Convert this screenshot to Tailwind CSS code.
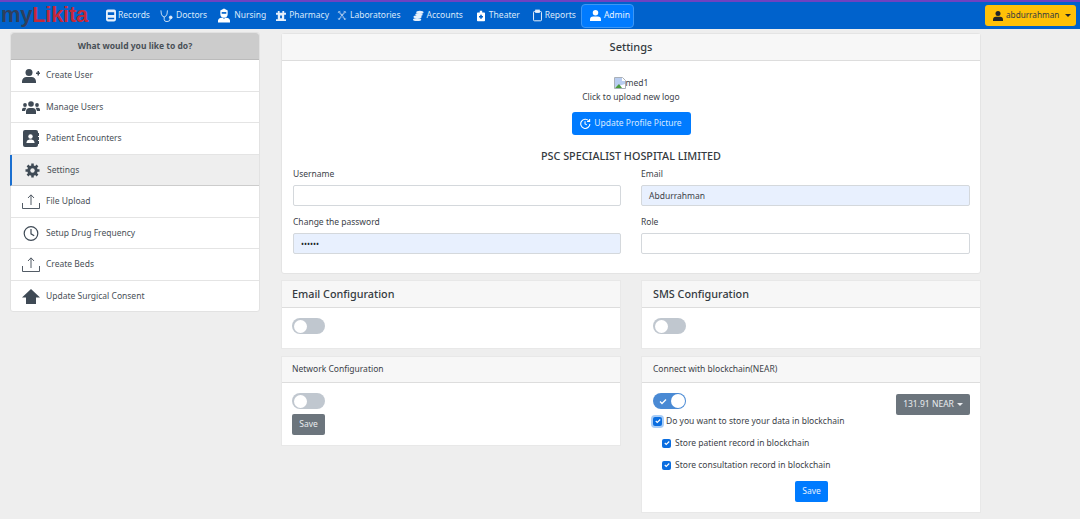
<!DOCTYPE html>
<html lang="en">
<head>
    <meta charset="utf-8">
    <title>Settings</title>
    <script src="https://cdn.jsdelivr.net/npm/@tailwindcss/browser@4"></script>
</head>
<body class="h-[519px] overflow-hidden bg-[#eeeeee] font-['Noto_Sans',sans-serif] text-[#495057]">
    <!-- top nav -->
    <nav class="flex h-[29px] items-center border-t-2 border-[#6f42c1] bg-[#0062cc] pr-[4px] text-[8.5px] text-[#dbe9fa]">
        <div class="-mt-[1px] w-[106px] pl-[1px] font-['Liberation_Sans',sans-serif] text-[22px] leading-none font-bold tracking-[-0.3px] text-[#2f3f5c]">my<span class="text-[#c4283a]">Likita</span></div>
        <div class="flex items-center gap-[2px]"><svg class="h-[13px] w-[10px]" viewBox="0 0 11 13" fill="#e6f0fb"><path d="M2 0h7a2 2 0 0 1 2 2v9a2 2 0 0 1-2 2H2a2 2 0 0 1-2-2V2a2 2 0 0 1 2-2zm0 3v3h7V3zm0 6v1.500h7V9z" fill-rule="evenodd"/></svg><span>Records</span></div>
        <div class="ml-[10px] flex items-center gap-[2px]"><svg class="h-[14px] w-[14px]" viewBox="0 0 15 14" fill="none" stroke="#e6f0fb" stroke-width="0.9"><path d="M1 1 L1.500 5 Q2.500 8 4.500 8 Q6.500 8 7.500 5 L8 1"/><path d="M4.500 8 V11 Q4.500 13 7.500 13 Q11 13 11 10"/><circle cx="11.500" cy="8.500" r="1.500" fill="#e6f0fb"/></svg><span>Doctors</span></div>
        <div class="ml-[11px] flex items-center gap-[4px]"><svg class="h-[15px] w-[12px]" viewBox="0 0 13 15" fill="#fff"><path d="M2.500 2 L6.500 0 L10.500 2 V6 a4 4 0 0 1-8 0z"/><rect x="4" y="3.800" width="5" height="1.800" fill="#0062cc"/><path d="M0 15 v-2 a4 4 0 0 1 4-3 h1.500 l1 1.500 l1-1.500 h1.500 a4 4 0 0 1 4 3 v2z"/></svg><span>Nursing</span></div>
        <div class="ml-[10px] flex items-center gap-[3px]"><svg class="h-[10px] w-[10px]" viewBox="0 0 11 11" fill="#e6f0fb"><path d="M0 2h2V0h2v2h3V0h2v2h2v2H9v5h2v2H0V9h2V4H0z"/><path d="M4.500 5h2v3h-2z" fill="#0062cc"/></svg><span>Pharmacy</span></div>
        <div class="ml-[8px] flex items-center gap-[3px]"><svg class="h-[11px] w-[10px]" viewBox="0 0 12 12" fill="none" stroke="#b9d2f0" stroke-width="1.500" stroke-dasharray="1.500 0.500"><path d="M2 1 L10 11 M10 1 L2 11"/><path d="M1 2.500 L4 1 M8 1 L11 2.500 M1 9.500 L3.500 11 M8.500 11 L11 9.500" stroke-width="1"/></svg><span>Laboratories</span></div>
        <div class="ml-[13px] flex items-center gap-[2px]"><svg class="h-[12px] w-[11px]" viewBox="0 0 12 12" fill="#e6f0fb"><ellipse cx="7.500" cy="2" rx="4" ry="1.700"/><ellipse cx="6.500" cy="4.600" rx="4" ry="1.500"/><ellipse cx="5" cy="7" rx="4.500" ry="1.500"/><ellipse cx="4.500" cy="9.800" rx="4.500" ry="1.700"/></svg><span>Accounts</span></div>
        <div class="ml-[14px] flex items-center gap-[4px]"><svg class="h-[12px] w-[8px]" viewBox="0 0 10 13" fill="#fff"><path d="M1 2h2.500V0h3v2H9a1 1 0 0 1 1 1v9a1 1 0 0 1-1 1H1a1 1 0 0 1-1-1V3a1 1 0 0 1 1-1z"/><path d="M4 5h2v1.500h1.500v2H6V10H4V8.500H2.500v-2H4z" fill="#0062cc"/></svg><span>Theater</span></div>
        <div class="ml-[13px] flex items-center gap-[3px]"><svg class="h-[13px] w-[9px]" viewBox="0 0 10 13" fill="none" stroke="#e6f0fb" stroke-width="1.100"><rect x="0.600" y="2" width="8.800" height="10.400" rx="1"/><rect x="3" y="0.500" width="4" height="2.500" fill="#e6f0fb"/></svg><span>Reports</span></div>
        <div class="ml-[5px] flex h-[24px] w-[53px] items-center gap-[3px] rounded-[4px] border border-[#3d97f5] bg-[#007bff] pl-[8px] text-[#e8f2fe]"><svg class="h-[11px] w-[11px]" viewBox="0 0 12 12" fill="#fff"><circle cx="6" cy="3" r="3"/><path d="M0 12v-1.500A3.500 3.500 0 0 1 3.500 7h5a3.500 3.500 0 0 1 3.500 3.500V12z"/></svg><span>Admin</span></div>
        <div class="ml-auto flex h-[21px] w-[91px] items-center rounded-[3px] bg-[#ffc107] pl-[8px] text-[8.200px] text-[#343a40]"><svg class="h-[10px] w-[10px]" viewBox="0 0 12 12" fill="#212529"><circle cx="6" cy="3" r="3"/><path d="M0 12v-1.500A3.500 3.500 0 0 1 3.500 7h5a3.500 3.500 0 0 1 3.500 3.500V12z"/></svg><span class="ml-[3px]">abdurrahman</span><span class="ml-[6px] border-x-[3px] border-t-[3px] border-x-transparent border-t-[#212529]"></span></div>
    </nav>

    <div class="flex items-start pl-[10px]">
        <!-- sidebar -->
        <aside class="mt-[3px] w-[250px] rounded-[3px] border border-[#e2e2e2] bg-white text-[8.5px]">
            <div class="flex h-[27px] items-center justify-center rounded-t-[3px] border-b border-[#bbb] bg-[#cccccc] font-bold text-[#495057]">What would you like to do?</div>
            <div class="flex h-[31.500px] items-center border-b border-[#e4e4e4] pt-[1px] pl-[11px]">
                <svg class="h-[14px] w-[18px]" viewBox="0 0 18 14" fill="#3f4a55"><circle cx="7" cy="3.500" r="3.500"/><path d="M0 14v-1.500A4.500 4.500 0 0 1 4.500 8h5a4.500 4.500 0 0 1 4.500 4.500V14z"/><path d="M14 3.500h1.500V2H17v1.500h1V5h-1v1.500h-1.500V5H14z"/></svg>
                <span class="ml-[6px]">Create User</span>
            </div>
            <div class="flex h-[31.500px] items-center border-b border-[#e4e4e4] pt-[1px] pl-[11px]">
                <svg class="h-[13px] w-[18px]" viewBox="0 0 18 13" fill="#3f4a55"><circle cx="9" cy="3" r="2.800"/><circle cx="3" cy="4" r="1.900"/><circle cx="15" cy="4" r="1.900"/><path d="M4 13v-2.500A3.500 3.500 0 0 1 7.500 7h3a3.500 3.500 0 0 1 3.500 3.500V13z"/><path d="M0 10V8.500A1.800 1.800 0 0 1 1.800 6.800h2.500L3 10zM18 10V8.500a1.800 1.800 0 0 0-1.800-1.700h-2.500L15 10z"/></svg>
                <span class="ml-[6px]">Manage Users</span>
            </div>
            <div class="flex h-[31.500px] items-center border-b border-[#e4e4e4] pt-[1px] pl-[12px]">
                <svg class="h-[17px] w-[16px]" viewBox="0 0 16 17" fill="#3f4a55"><path d="M2 0h11a2 2 0 0 1 2 2v13a2 2 0 0 1-2 2H2a2 2 0 0 1-2-2V2a2 2 0 0 1 2-2z"/><rect x="15" y="3" width="1" height="3"/><rect x="15" y="7" width="1" height="3"/><rect x="15" y="11" width="1" height="3"/><circle cx="7.500" cy="6.500" r="2.200" fill="#fff"/><path d="M3.500 13v-1a3 3 0 0 1 3-2.500h2a3 3 0 0 1 3 2.500v1z" fill="#fff"/></svg>
                <span class="ml-[7px]">Patient Encounters</span>
            </div>
            <div class="-ml-[1px] flex h-[31.500px] items-center border-b border-l-2 border-[#ccc] border-l-[#1a6fd0] bg-[#eeeeee] pt-[1px] pl-[13px]">
                <svg class="h-[15px] w-[15px]" viewBox="0 0 15 15"><circle cx="7.500" cy="7.500" r="3.700" fill="none" stroke="#3f4a55" stroke-width="3"/><path d="M7.500 0.500v14M0.500 7.500h14M2.500 2.500l10 10M12.500 2.500l-10 10" stroke="#3f4a55" stroke-width="2.500"/><circle cx="7.500" cy="7.500" r="2.200" fill="#eeeeee"/></svg>
                <span class="ml-[7px]">Settings</span>
            </div>
            <div class="flex h-[31.500px] items-center border-b border-[#e4e4e4] pt-[1px] pl-[11px]">
                <svg class="h-[15px] w-[18px]" viewBox="0 0 18 15" fill="none" stroke="#3f4a55" stroke-width="0.900"><path d="M0.500 9v5.500h17V9M9 11V1M6 4l3-3.200L12 4"/></svg>
                <span class="ml-[6px]">File Upload</span>
            </div>
            <div class="flex h-[31.500px] items-center border-b border-[#e4e4e4] pt-[1px] pl-[12px]">
                <svg class="h-[15px] w-[16px]" viewBox="0 0 16 15" fill="none" stroke="#3f4a55" stroke-width="1.200"><circle cx="8" cy="7.500" r="6.800"/><path d="M8 3v4.800l3.200 2"/></svg>
                <span class="ml-[7px]">Setup Drug Frequency</span>
            </div>
            <div class="flex h-[31.500px] items-center border-b border-[#e4e4e4] pt-[1px] pl-[11px]">
                <svg class="h-[15px] w-[18px]" viewBox="0 0 18 15" fill="none" stroke="#3f4a55" stroke-width="0.900"><path d="M0.500 9v5.500h17V9M9 11V1M6 4l3-3.200L12 4"/></svg>
                <span class="ml-[6px]">Create Beds</span>
            </div>
            <div class="flex h-[30px] items-center pt-[1px] pl-[11px]">
                <svg class="h-[15px] w-[18px]" viewBox="0 0 18 15" fill="#3f4a55"><path d="M9 0l9 8.500h-4V15H4V8.500H0z"/></svg>
                <span class="ml-[6px]">Update Surgical Consent</span>
            </div>
        </aside>

        <main class="mt-[4px] ml-[21px] w-[700px] text-[8.5px] text-[#3c4249]">
            <!-- settings card -->
            <section class="h-[241px] rounded-[3px] border border-[#e4e4e4] bg-white">
                <div class="flex h-[27px] items-center justify-center border-b border-[#ddd] bg-[#f7f7f7] text-[11px] font-medium text-[#343a40]">Settings</div>
                <div class="flex flex-col items-center pt-[16px]">
                    <div class="flex h-[12px] items-center leading-none"><svg class="h-[12px] w-[12px]" viewBox="0 0 12 12"><path d="M0.500 0.500h8l3 3v8h-11z" fill="#fff" stroke="#a9b0b8"/><path d="M1 1h7v3h3v3L1 10z" fill="#b9cdf0"/><path d="M1 11l4-4 3 4z" fill="#4b9a3f"/></svg><span>med1</span></div>
                    <div class="mt-[1px] leading-[14px]">Click to upload new logo</div>
                    <div class="mt-[8px] flex h-[23px] w-[119px] items-center justify-center gap-[3px] rounded-[3px] bg-[#007bff] text-[#d7e9ff]"><svg class="h-[11px] w-[11px]" viewBox="0 0 12 12" fill="none" stroke="#fff" stroke-width="1.200"><path d="M9.500 3a5 5 0 1 0 1.300 3.500M10.500 1v2.800H7.700M5.500 3.500v3l2 1"/></svg><span>Update Profile Picture</span></div>
                    <div class="mt-[13px] text-[10.800px] leading-[15px] font-medium text-[#343a40]">PSC SPECIALIST HOSPITAL LIMITED</div>
                </div>
                <div class="mt-[3px] grid grid-cols-[328px_329px] gap-x-[20px] pl-[11px]">
                    <div>
                        <div class="h-[16px] leading-[16px]">Username</div>
                        <div class="mt-[3px] h-[21px] rounded-[2px] border border-[#d4d8dc] bg-white"></div>
                    </div>
                    <div>
                        <div class="h-[16px] leading-[16px]">Email</div>
                        <div class="mt-[3px] flex h-[21px] items-center rounded-[2px] border border-[#d4d8dc] bg-[#e8f0fe] pt-[1px] pl-[7px]">Abdurrahman</div>
                    </div>
                    <div class="mt-[8px]">
                        <div class="h-[16px] leading-[16px]">Change the password</div>
                        <div class="mt-[3px] flex h-[21px] items-center rounded-[2px] border border-[#d4d8dc] bg-[#e8f0fe] pl-[7px] text-[8px] text-[#212529]">••••••</div>
                    </div>
                    <div class="mt-[8px]">
                        <div class="h-[16px] leading-[16px]">Role</div>
                        <div class="mt-[3px] h-[21px] rounded-[2px] border border-[#d4d8dc] bg-white"></div>
                    </div>
                </div>
            </section>

            <div class="mt-[6px] grid grid-cols-2 gap-x-[20px]">
                <div class="flex flex-col gap-[7px]">
                    <section class="h-[69px] border border-[#e8e8e8] bg-white">
                        <div class="flex h-[27px] items-center border-b border-[#ddd] bg-[#f7f7f7] pl-[10px] text-[10.800px] font-medium text-[#343a40]">Email Configuration</div>
                        <div class="pt-[10px] pl-[10px]">
                            <div class="flex h-[16px] w-[33px] items-center rounded-full bg-[#c0c7cf] pl-[2px]"><div class="size-[13px] rounded-full bg-white"></div></div>
                        </div>
                    </section>
                    <section class="h-[90px] border border-[#e8e8e8] bg-white">
                        <div class="flex h-[26px] items-center border-b border-[#ddd] bg-[#f7f7f7] pl-[10px]">Network Configuration</div>
                        <div class="pt-[10px] pl-[10px]">
                            <div class="flex h-[16px] w-[33px] items-center rounded-full bg-[#c0c7cf] pl-[2px]"><div class="size-[13px] rounded-full bg-white"></div></div>
                            <div class="mt-[5px] flex h-[21px] w-[33px] items-center justify-center rounded-[2px] bg-[#6c757d] text-[#e9ecef]">Save</div>
                        </div>
                    </section>
                </div>
                <div class="flex flex-col gap-[7px]">
                    <section class="h-[69px] border border-[#e8e8e8] bg-white">
                        <div class="flex h-[27px] items-center border-b border-[#ddd] bg-[#f7f7f7] pl-[11px] text-[10.800px] font-medium text-[#343a40]">SMS Configuration</div>
                        <div class="pt-[10px] pl-[11px]">
                            <div class="flex h-[16px] w-[33px] items-center rounded-full bg-[#c0c7cf] pl-[2px]"><div class="size-[13px] rounded-full bg-white"></div></div>
                        </div>
                    </section>
                    <section class="h-[157px] border border-[#e8e8e8] bg-white">
                        <div class="flex h-[26px] items-center border-b border-[#ddd] bg-[#f7f7f7] pl-[11px]">Connect with blockchain(NEAR)</div>
                        <div class="relative px-[11px] pt-[10px]">
                            <div class="flex h-[16px] w-[33px] items-center justify-end rounded-full bg-[#4a8ad4] pr-[1px]">
                                <svg class="mr-[4px] h-[7px] w-[8px]" viewBox="0 0 8 7" fill="none" stroke="#fff" stroke-width="1.300"><path d="M1 3.500l2 2 4-4"/></svg>
                                <div class="size-[14px] rounded-full bg-white"></div>
                            </div>
                            <div class="absolute top-[11px] right-[10px] flex h-[21px] w-[74px] items-center justify-center gap-[3px] rounded-[2px] bg-[#6c757d] text-[#e9ecef]">131.91 NEAR<span class="border-x-[3px] border-t-[3px] border-x-transparent border-t-[#e9ecef]"></span></div>
                            <label class="mt-[4px] flex h-[16px] items-center gap-[4px]">
                                <span class="flex size-[9px] items-center justify-center rounded-[2px] bg-[#0b6ee0] ring-2 ring-[#a8cdf7]"><svg class="h-[6px] w-[6px]" viewBox="0 0 8 7" fill="none" stroke="#fff" stroke-width="1.500"><path d="M1 3.500l2 2 4-4"/></svg></span>
                                <span>Do you want to store your data in blockchain</span>
                            </label>
                            <label class="mt-[6px] ml-[9px] flex h-[16px] items-center gap-[4px]">
                                <span class="flex size-[9px] items-center justify-center rounded-[2px] bg-[#0b6ee0]"><svg class="h-[6px] w-[6px]" viewBox="0 0 8 7" fill="none" stroke="#fff" stroke-width="1.500"><path d="M1 3.500l2 2 4-4"/></svg></span>
                                <span>Store patient record in blockchain</span>
                            </label>
                            <label class="mt-[6px] ml-[9px] flex h-[16px] items-center gap-[4px]">
                                <span class="flex size-[9px] items-center justify-center rounded-[2px] bg-[#0b6ee0]"><svg class="h-[6px] w-[6px]" viewBox="0 0 8 7" fill="none" stroke="#fff" stroke-width="1.500"><path d="M1 3.500l2 2 4-4"/></svg></span>
                                <span>Store consultation record in blockchain</span>
                            </label>
                            <div class="mt-[8px] ml-[142px] flex h-[21px] w-[33px] items-center justify-center rounded-[2px] bg-[#007bff] text-[#e8f2fe]">Save</div>
                        </div>
                    </section>
                </div>
            </div>
        </main>
    </div>
</body>
</html>
